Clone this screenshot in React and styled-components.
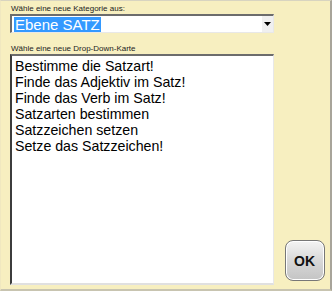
import React from 'react';
import styled, { createGlobalStyle } from 'styled-components';

const GlobalStyle = createGlobalStyle`
  html, body {
    margin: 0;
    padding: 0;
    background: #f7efc0;
  }
  body {
    font-family: "Liberation Sans", Arial, sans-serif;
  }
`;

const items = [
  'Bestimme die Satzart!',
  'Finde das Adjektiv im Satz!',
  'Finde das Verb im Satz!',
  'Satzarten bestimmen',
  'Satzzeichen setzen',
  'Setze das Satzzeichen!',
];

const App = () => {
  return (
    <>
      <GlobalStyle />
      <Frame>
        <Column>
          <Label>Wähle eine neue Kategorie aus:</Label>
          <Select>
            <Selected>Ebene SATZ</Selected>
            <ArrowButton>
              <svg width="7" height="4" viewBox="0 0 7 4">
                <path d="M0 0h7L3.5 4z" fill="#000" />
              </svg>
            </ArrowButton>
          </Select>
          <Label $top={11}>Wähle eine neue Drop-Down-Karte</Label>
          <ListBox>
            {items.map((item) => (
              <Item key={item}>{item}</Item>
            ))}
          </ListBox>
        </Column>
        <Side>
          <OkButton>OK</OkButton>
        </Side>
      </Frame>
    </>
  );
};

export default App;

const Frame = styled.div`
  width: 332px;
  height: 291px;
  box-sizing: border-box;
  border-top: 1px solid #d8d4c0;
  border-right: 2px solid #a8a49a;
  border-bottom: 2px solid #c8c4b0;
  border-left: 1px solid #f0e8c0;
  display: flex;
  padding: 3px 0 4px 9px;
`;

const Column = styled.div`
  width: 264px;
  display: flex;
  flex-direction: column;
`;

const Label = styled.div`
  font-size: 8px;
  line-height: 9px;
  color: #222;
  margin-top: ${({ $top }) => ($top || 0)}px;
  margin-bottom: 1px;
  padding-left: 1px;
`;

const Select = styled.div`
  height: 19px;
  box-sizing: border-box;
  background: #fff;
  border-top: 2px solid #6c6c6c;
  border-left: 2px solid #6c6c6c;
  border-right: 1px solid #e8e8e8;
  border-bottom: 1px solid #e8e8e8;
  display: flex;
  align-items: center;
  justify-content: space-between;
  padding-left: 2px;
`;

const Selected = styled.span`
  font-size: 15px;
  line-height: 15px;
  background: #3399ff;
  color: #fff;
  padding: 0 1px;
`;

const ArrowButton = styled.div`
  width: 11px;
  height: 16px;
  background: #f0f0f0;
  border-left: 1px solid #fff;
  display: flex;
  align-items: center;
  justify-content: center;
`;

const ListBox = styled.div`
  flex: 1;
  box-sizing: border-box;
  background: #fff;
  border-top: 2px solid #6c6c6c;
  border-left: 2px solid #3c3c3c;
  border-right: 1px solid #e8e8e8;
  border-bottom: 2px solid #e0e0e0;
  padding: 2px 0 0 3px;
`;

const Item = styled.div`
  font-size: 14.2px;
  line-height: 16px;
  color: #000;
`;

const Side = styled.div`
  flex: 1;
  display: flex;
  align-items: flex-end;
  justify-content: center;
  padding-bottom: 4px;
`;

const OkButton = styled.div`
  width: 40px;
  height: 41px;
  box-sizing: border-box;
  border: 1px solid #777;
  border-radius: 8px;
  background: linear-gradient(#f4f4f4, #d8d8d8 50%, #c4c4c4);
  box-shadow: inset 0 0 0 1px #fff;
  display: flex;
  align-items: center;
  justify-content: center;
  font-weight: bold;
  font-size: 14px;
  color: #111;
  margin-left: 5px;
`;
